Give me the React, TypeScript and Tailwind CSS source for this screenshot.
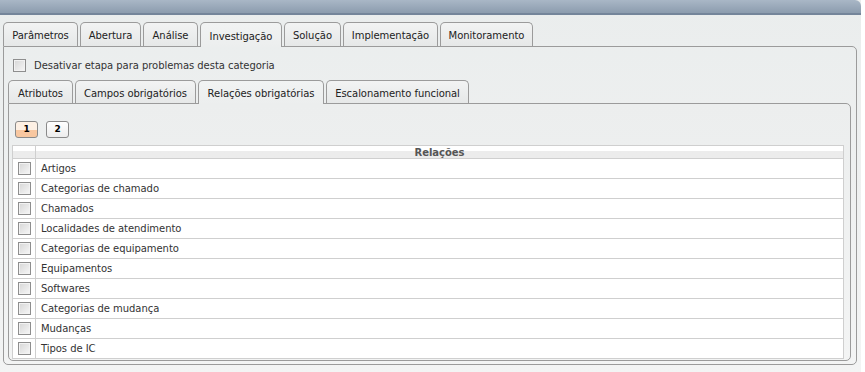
import React from "react";

const outerTabs: [string, number][] = [
  ["Parâmetros", 75],
  ["Abertura", 61],
  ["Análise", 55],
  ["Investigação", 82],
  ["Solução", 57],
  ["Implementação", 95],
  ["Monitoramento", 93],
];
const innerTabs: [string, number][] = [
  ["Atributos", 65],
  ["Campos obrigatórios", 121],
  ["Relações obrigatórias", 126],
  ["Escalonamento funcional", 143],
];
const rows = [
  "Artigos",
  "Categorias de chamado",
  "Chamados",
  "Localidades de atendimento",
  "Categorias de equipamento",
  "Equipamentos",
  "Softwares",
  "Categorias de mudança",
  "Mudanças",
  "Tipos de IC",
];

function Check() {
  return (
    <div className="w-[13px] h-[13px] border border-[#8e8e8e] bg-gradient-to-br from-[#d6d6d6] to-[#f7f7f7] shadow-[inset_0_0_0_1px_#f2f2f2]" />
  );
}

function Tab({ label, w, h, active }: { label: string; w: number; h: number; active?: boolean }) {
  return (
    <div
      style={{ width: w, height: active ? h + 1 : h }}
      className={
        "flex items-center justify-center border border-b-0 border-[#9b9b9b] rounded-t-[5px] text-[#222] shrink-0 " +
        (active
          ? "bg-gradient-to-b from-[#f1f3f3] to-[#eceeee] relative z-10 mb-[-1px] pt-[2px]"
          : "bg-gradient-to-b from-[#f2f3f3] to-[#e6e8e8] pt-[2px]")
      }
    >
      <span>{label}</span>
    </div>
  );
}

export default function App() {
  return (
    <div
      className="w-[865px] h-[372px] bg-white overflow-hidden text-[10px] tracking-[-0.05px]"
      style={{ fontFamily: '"DejaVu Sans", Verdana, sans-serif' }}
    >
      <div className="w-[861px] h-[372px] bg-gradient-to-b from-[#eaeded] to-[#f3f4f4] flex flex-col">
        <div className="h-[15px] shrink-0 rounded-tr-[6px] bg-gradient-to-b from-[#a9b7c6] to-[#8c9cae] border-b-[2px] border-[#74859a]" />
        <div className="pl-[3px] pr-[4px] pt-[7px] flex flex-col">
          <div className="flex gap-[2px] items-end">
            {outerTabs.map(([l, w]) => (
              <Tab key={l} label={l} w={w} h={24} active={l === "Investigação"} />
            ))}
          </div>
          <div className="border border-[#9b9b9b] rounded-b-[5px] rounded-tr-[5px] h-[319px] pl-[4px] pr-[5px] flex flex-col">
            <div className="flex items-center h-[13px] gap-[8px] ml-[5px] mt-[12px] text-[#333] shrink-0">
              <Check />
              <span>Desativar etapa para problemas desta categoria</span>
            </div>
            <div className="flex gap-[2px] items-end mt-[8px]">
              {innerTabs.map(([l, w]) => (
                <Tab key={l} label={l} w={w} h={23} active={l === "Relações obrigatórias"} />
              ))}
            </div>
            <div className="border border-[#9b9b9b] rounded-b-[5px] rounded-tr-[5px] h-[258px] shrink-0 pl-[3px] pr-[6px] flex flex-col bg-gradient-to-b from-[#eceeee] to-[#f3f4f4]">
              <div className="flex gap-[8px] ml-[3px] mt-[17px]">
                <div className="w-[23px] h-[17px] border border-[#8a8a8a] rounded-[3px] flex items-center justify-center font-bold text-[9px] text-black bg-gradient-to-b from-[#fdf0e4] from-50% to-[#f8c7a0] to-50%">
                  1
                </div>
                <div className="w-[23px] h-[17px] border border-[#8a8a8a] rounded-[3px] flex items-center justify-center font-bold text-[9px] text-black bg-gradient-to-b from-white to-[#ededed]">
                  2
                </div>
              </div>
              <div className="mt-[7px] bg-white border border-[#cfcfcf] border-b-0">
                <div className="flex h-[13px] bg-gradient-to-b from-white from-45% to-[#ececec] to-45% border-b border-[#cfcfcf]">
                  <div className="w-[23px] border-r border-[#cfcfcf]" />
                  <div className="flex-1 flex items-center justify-center font-bold text-[#555]">Relações</div>
                </div>
                {rows.map((r) => (
                  <div key={r} className="flex h-[20px] border-b border-[#cfcfcf]">
                    <div className="w-[23px] border-r border-[#cfcfcf] flex items-center justify-center">
                      <Check />
                    </div>
                    <div className="flex-1 flex items-center pl-[5px] text-[#333]">{r}</div>
                  </div>
                ))}
              </div>
            </div>
          </div>
        </div>
      </div>
    </div>
  );
}
